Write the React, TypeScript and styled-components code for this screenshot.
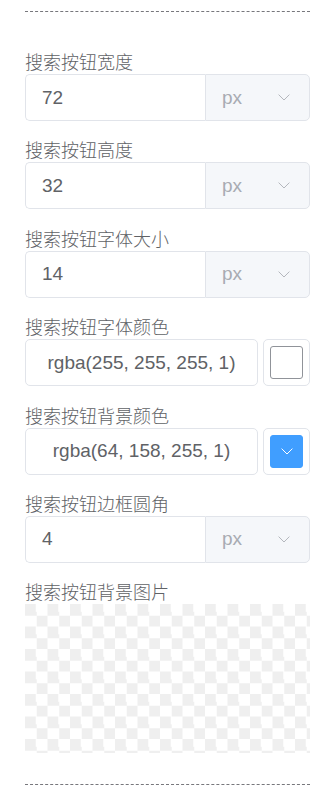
import React from 'react';
import styled, { createGlobalStyle } from 'styled-components';

const GlobalStyle = createGlobalStyle`
  html, body {
    margin: 0;
    padding: 0;
    background: #fff;
  }
  body {
    font-family: "Liberation Sans", "Noto Sans CJK SC", Arial, sans-serif;
  }
`;

interface IUnitField {
  label: string;
  value: string;
}

interface IColorField {
  label: string;
  value: string;
  swatch: string;
  dark?: boolean;
}

const sizeFields: IUnitField[] = [
  { label: '搜索按钮宽度', value: '72' },
  { label: '搜索按钮高度', value: '32' },
  { label: '搜索按钮字体大小', value: '14' },
];

const colorFields: IColorField[] = [
  { label: '搜索按钮字体颜色', value: 'rgba(255, 255, 255, 1)', swatch: '#ffffff' },
  { label: '搜索按钮背景颜色', value: 'rgba(64, 158, 255, 1)', swatch: '#409eff', dark: true },
];

const Chevron = ({ color }: { color: string }) => (
  <svg width="12" height="7" viewBox="0 0 12 7" fill="none">
    <path d="M0.6 0.6 L6 6 L11.4 0.6" stroke={color} strokeWidth="1" />
  </svg>
);

const UnitField = ({ label, value }: IUnitField) => (
  <FormItem>
    <Label>{label}</Label>
    <InputGroup>
      <TextInput>{value}</TextInput>
      <UnitSelect>
        <span>px</span>
        <Chevron color="#b4b7bd" />
      </UnitSelect>
    </InputGroup>
  </FormItem>
);

const ColorField = ({ label, value, swatch, dark }: IColorField) => (
  <FormItem>
    <Label>{label}</Label>
    <ColorRow>
      <ColorText>{value}</ColorText>
      <Picker>
        <Swatch $color={swatch} $dark={dark}>
          {dark ? <Chevron color="#ffffff" /> : null}
        </Swatch>
      </Picker>
    </ColorRow>
  </FormItem>
);

const App = () => {
  return (
    <Panel>
      <GlobalStyle />
      <Divider />
      <Form>
        {sizeFields.map((f) => (
          <UnitField key={f.label} {...f} />
        ))}
        {colorFields.map((f) => (
          <ColorField key={f.label} {...f} />
        ))}
        <UnitField label="搜索按钮边框圆角" value="4" />
        <FormItem>
          <Label>搜索按钮背景图片</Label>
          <ImageBox />
        </FormItem>
      </Form>
      <Divider $bottom />
    </Panel>
  );
};

const Panel = styled.div`
  width: 333px;
  box-sizing: border-box;
  padding: 11px 23px 0 25px;
`;

const Divider = styled.div<{ $bottom?: boolean }>`
  height: 0;
  border-top: 1px dashed #77777c;
  margin-top: ${(p) => (p.$bottom ? '31px' : '0')};
`;

const Form = styled.div`
  display: flex;
  flex-direction: column;
  row-gap: 16.4px;
  margin-top: 37px;
`;

const FormItem = styled.div`
  display: flex;
  flex-direction: column;
`;

const Label = styled.div`
  font-family: "Noto Sans CJK SC", "Liberation Sans", sans-serif;
  font-size: 18px;
  font-weight: 300;
  line-height: 25px;
  color: #606266;
`;

const InputGroup = styled.div`
  display: flex;
  height: 47px;
`;

const TextInput = styled.div`
  flex: 0 0 180px;
  box-sizing: border-box;
  border: 1px solid #e1e4ea;
  border-right: none;
  border-radius: 5px 0 0 5px;
  padding-left: 16px;
  display: flex;
  align-items: center;
  font-size: 19px;
  color: #606266;
`;

const UnitSelect = styled.div`
  flex: 1;
  box-sizing: border-box;
  border: 1px solid #e1e4ea;
  border-radius: 0 5px 5px 0;
  background: #f5f7fa;
  display: flex;
  align-items: center;
  justify-content: space-between;
  padding: 0 19px 0 16px;
  font-size: 19px;
  color: #a8abb2;
`;

const ColorRow = styled.div`
  display: flex;
  column-gap: 5px;
  height: 47px;
`;

const ColorText = styled.div`
  flex: 1;
  box-sizing: border-box;
  border: 1px solid #e1e4ea;
  border-radius: 5px;
  display: flex;
  align-items: center;
  justify-content: center;
  font-size: 19px;
  color: #606266;
`;

const Picker = styled.div`
  flex: 0 0 47px;
  box-sizing: border-box;
  border: 1px solid #e1e4ea;
  border-radius: 5px;
  display: flex;
  align-items: center;
  justify-content: center;
`;

const Swatch = styled.div<{ $color: string; $dark?: boolean }>`
  width: 33px;
  height: 33px;
  box-sizing: border-box;
  border-radius: 3px;
  background: ${(p) => p.$color};
  border: 1px solid ${(p) => (p.$dark ? '#409eff' : '#909399')};
  display: flex;
  align-items: center;
  justify-content: center;
`;

const ImageBox = styled.div`
  height: 149px;
  background: repeating-conic-gradient(#ffffff 0 25%, #efefef 0 50%) 0 0 / 22.5px 22.5px;
`;

export default App;
